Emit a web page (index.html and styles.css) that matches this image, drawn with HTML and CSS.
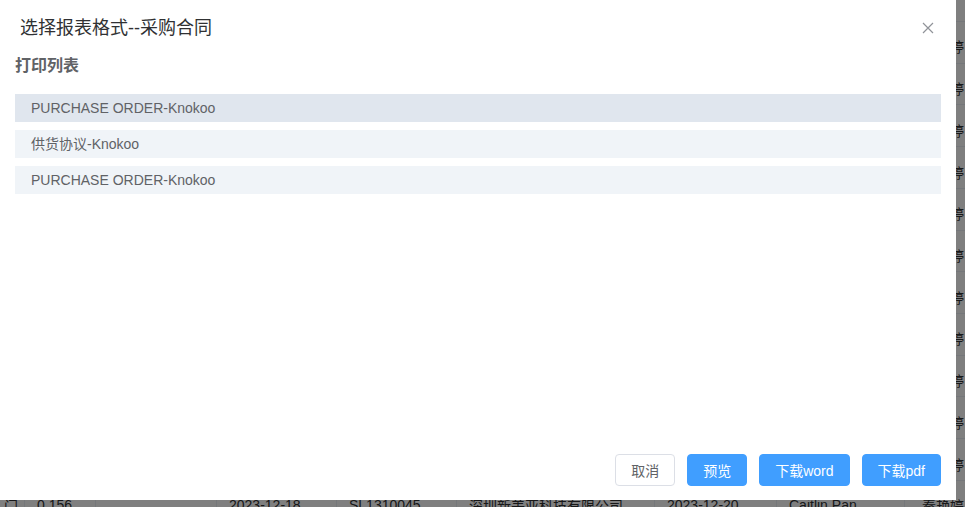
FILE: index.html
```html
<!DOCTYPE html>
<html lang="zh-CN">
<head>
    <meta charset="UTF-8">
    <meta name="viewport" content="width=device-width, initial-scale=1.0">
    <title>采购合同</title>
    <link rel="stylesheet" href="styles.css">
</head>
<body>
    <div class="page">
        <div class="grid-head"></div>
        <div id="rows"></div>
    </div>

    <div class="mask"></div>

    <div class="dialog">
        <div class="dialog-header">
            <span class="dialog-title">选择报表格式--采购合同</span>
            <button class="dialog-close" aria-label="关闭">
                <svg width="12" height="12" viewBox="0 0 12 12">
                    <path d="M1 1 L11 11 M11 1 L1 11" stroke="#909399" stroke-width="1.2" fill="none"/>
                </svg>
            </button>
        </div>
        <div class="dialog-body">
            <h3 class="list-title">打印列表</h3>
            <ul class="report-list">
                <li class="report-item active">PURCHASE ORDER-Knokoo</li>
                <li class="report-item">供货协议-Knokoo</li>
                <li class="report-item">PURCHASE ORDER-Knokoo</li>
            </ul>
        </div>
        <div class="dialog-footer">
            <button class="btn">取消</button>
            <button class="btn btn-primary">预览</button>
            <button class="btn btn-primary">下载word</button>
            <button class="btn btn-primary">下载pdf</button>
        </div>
    </div>

    <script>
        const rowsDiv = document.getElementById('rows');
        for (let i = 0; i < 12; i++) {
            const row = document.createElement('div');
            row.className = 'grid-row';
            row.innerHTML = `
                <div class="cell">门</div>
                <div class="cell">0.156</div>
                <div class="cell"></div>
                <div class="cell">2023-12-18</div>
                <div class="cell">SL1310045</div>
                <div class="cell">深圳新美亚科技有限公司</div>
                <div class="cell">2023-12-20</div>
                <div class="cell">Caitlin Pan</div>
                <div class="cell">秦艳婷</div>
            `;
            rowsDiv.appendChild(row);
        }
    </script>
</body>
</html>
```

FILE: styles.css
```css
:root {
  --primary: #409eff;
  --text: #303133;
  --text-regular: #606266;
  --border: #dcdfe6;
  --line: #ebeef5;
}

* {
  box-sizing: border-box;
  margin: 0;
  padding: 0;
}

body {
  font-family: 'Liberation Sans', 'Noto Sans CJK SC', sans-serif;
  font-size: 14px;
  color: var(--text-regular);
  background: #fff;
  overflow: hidden;
}

/* table behind the dialog */
.page {
  width: 1000px;
}

.grid-head {
  height: 22px;
  border-bottom: 1px solid var(--line);
}

.grid-row {
  display: grid;
  grid-template-columns: 25px 71px 121px 120px 120px 198px 122px 128px 95px;
  height: 41.73px;
  border-bottom: 1px solid var(--line);
}

.cell {
  display: flex;
  align-items: center;
  padding: 8px 0 0 12px;
  border-right: 1px solid var(--line);
  white-space: nowrap;
  overflow: hidden;
  color: #303133;
}

.cell:first-child {
  justify-content: flex-end;
  padding: 8px 6px 0 0;
}

.cell:nth-child(9) {
  padding-left: 17px;
}

.mask {
  position: fixed;
  inset: 0;
  background: rgba(0, 0, 0, 0.5);
}

/* dialog */
.dialog {
  position: fixed;
  left: 0;
  top: 0;
  width: 956px;
  height: 500px;
  background: #fff;
  display: flex;
  flex-direction: column;
}

.dialog-header {
  position: relative;
  padding: 16px 20px 0;
}

.dialog-title {
  font-size: 18px;
  line-height: 24px;
  color: var(--text);
}

.dialog-close {
  position: absolute;
  top: 22px;
  right: 22px;
  width: 12px;
  height: 12px;
  border: none;
  background: none;
  display: flex;
  cursor: pointer;
}

.dialog-body {
  padding: 15px 15px 0;
}

.list-title {
  font-size: 16px;
  line-height: 22px;
  font-weight: bold;
  color: var(--text-regular);
  margin-bottom: 17px;
}

.report-list {
  list-style: none;
  display: flex;
  flex-direction: column;
  gap: 8px;
}

.report-item {
  height: 28px;
  line-height: 28px;
  padding-left: 16px;
  background: #f0f4f8;
  color: var(--text-regular);
  cursor: pointer;
}

.report-item.active {
  background: #e0e6ee;
}

.dialog-footer {
  margin-top: auto;
  padding: 0 15px 14px;
  display: flex;
  justify-content: flex-end;
  gap: 12px;
}

.btn {
  height: 32px;
  padding: 0 15px;
  font-family: inherit;
  font-size: 14px;
  color: var(--text-regular);
  background: #fff;
  border: 1px solid var(--border);
  border-radius: 4px;
  cursor: pointer;
}

.btn-primary {
  color: #fff;
  background: var(--primary);
  border-color: var(--primary);
}
```
